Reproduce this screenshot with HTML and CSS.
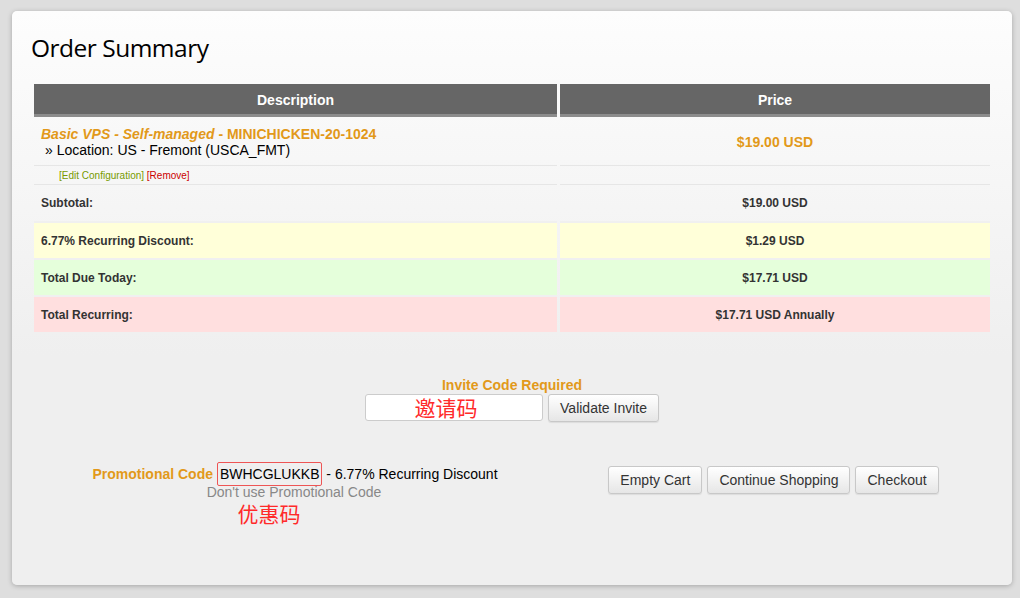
FILE: index.html
```html
<!DOCTYPE html>
<html>
    <head>
        <meta charset="UTF-8">
        <title>Order Summary</title>
        <link rel="stylesheet" href="styles.css">
    </head>
    <body>
        <div class="cart-card">
            <h1 class="cart-title">Order Summary</h1>
            <table class="cart-table">
                <thead>
                    <tr>
                        <th class="col-desc">Description</th>
                        <th class="col-price">Price</th>
                    </tr>
                </thead>
                <tbody>
                    <tr class="cart-product">
                        <td>
                            <div class="product-name"><em>Basic VPS - Self-managed</em> - MINICHICKEN-20-1024</div>
                            <div class="product-option">&raquo; Location: US - Fremont (USCA_FMT)</div>
                        </td>
                        <td class="price product-price">$19.00 USD</td>
                    </tr>
                    <tr class="cart-actions">
                        <td>
                            <a href="#" class="edit-link">[Edit Configuration]</a>
                            <a href="#" class="remove-link">[Remove]</a>
                        </td>
                        <td></td>
                    </tr>
                    <tr class="cart-sum is-subtotal">
                        <td>Subtotal:</td>
                        <td class="price">$19.00 USD</td>
                    </tr>
                    <tr class="cart-sum is-discount">
                        <td>6.77% Recurring Discount:</td>
                        <td class="price">$1.29 USD</td>
                    </tr>
                    <tr class="cart-sum is-today">
                        <td>Total Due Today:</td>
                        <td class="price">$17.71 USD</td>
                    </tr>
                    <tr class="cart-sum is-recurring">
                        <td>Total Recurring:</td>
                        <td class="price">$17.71 USD Annually</td>
                    </tr>
                </tbody>
            </table>

            <div class="invite">
                <div class="invite-label">Invite Code Required</div>
                <div class="invite-form">
                    <div class="invite-input">邀请码</div>
                    <button class="btn">Validate Invite</button>
                </div>
            </div>

            <div class="cart-bottom">
                <div class="promo">
                    <div class="promo-line">
                        <span class="promo-label">Promotional Code</span>
                        <span class="promo-code">BWHCGLUKKB</span>
                        - 6.77% Recurring Discount
                    </div>
                    <a href="#" class="promo-remove">Don't use Promotional Code</a>
                    <div class="promo-note">优惠码</div>
                </div>
                <div class="cart-buttons">
                    <button class="btn">Empty Cart</button>
                    <button class="btn">Continue Shopping</button>
                    <button class="btn">Checkout</button>
                </div>
            </div>
        </div>
    </body>
</html>
```

FILE: styles.css
```css
* {
    padding: 0;
    margin: 0;
    box-sizing: border-box;
}

html, body {
    height: 100%;
    width: 100%;
}

body {
    background-color: #dedede;
    font-family: "Liberation Sans", Arial, sans-serif;
    font-size: 14px;
    color: #000;
    padding: 11px 8px 0 12px;
}

.cart-card {
    width: 1000px;
    height: 574px;
    border-radius: 5px;
    background: linear-gradient(#fdfdfd, #efefef 60%, #efefef);
    box-shadow: 0 1px 5px rgba(0, 0, 0, 0.25);
    padding: 20px 0 0 19px;
}

.cart-title {
    font-family: "Open Sans", "Noto Sans", sans-serif;
    font-weight: 400;
    font-size: 24.5px;
    letter-spacing: -0.5px;
    color: #000;
    height: 53px;
    line-height: 34px;
}

.cart-table {
    width: 962px;
    border-collapse: separate;
    border-spacing: 3px 0;
}

.cart-table th {
    background-color: #666;
    color: #fff;
    font-size: 14px;
    font-weight: bold;
    height: 33px;
    padding-top: 1px;
    border-bottom: 3px solid #8c8c8c;
}

.cart-table .col-desc {
    width: 523px;
}

.cart-table td {
    vertical-align: middle;
}

.cart-product td {
    height: 49px;
    padding: 2px 7px 0;
    border-bottom: 1px solid #e6e6e6;
}

.product-name {
    color: #e2991a;
    font-weight: bold;
    line-height: 16px;
}

.product-option {
    padding-left: 4px;
    line-height: 17px;
}

.product-price {
    color: #e2991a;
    font-weight: bold;
    font-size: 14px;
}

.cart-actions td {
    height: 19px;
    padding-left: 25px;
    font-size: 10px;
    border-bottom: 1px solid #e6e6e6;
}

.cart-actions a {
    text-decoration: none;
}

.edit-link {
    color: #779a00;
}

.remove-link {
    color: #cc0000;
}

.cart-sum td {
    height: 37px;
    padding-left: 7px;
    font-size: 12px;
    font-weight: bold;
    color: #333;
    border-bottom: 2px solid #f0f0f0;
}

.cart-sum td.price {
    padding-left: 0;
    text-align: center;
}

.cart-sum.is-subtotal td {
    height: 38px;
}

.cart-sum.is-discount td {
    background-color: #ffffd9;
}

.cart-sum.is-today td {
    background-color: #e5ffdb;
}

.cart-sum.is-recurring td {
    background-color: #ffdfdf;
}

.price {
    text-align: center;
}

.invite {
    margin-top: 43px;
    margin-left: -19px;
    text-align: center;
}

.invite-label {
    color: #e2991a;
    font-weight: bold;
    font-size: 14px;
    line-height: 16px;
}

.invite-form {
    display: flex;
    justify-content: center;
    gap: 5px;
    margin-top: 1px;
}

.invite-input {
    width: 178px;
    height: 27px;
    background-color: #fff;
    border: 1px solid #ccc;
    border-radius: 3px;
    color: #ff2a2a;
    font-family: "Noto Sans CJK SC", sans-serif;
    font-size: 21px;
    line-height: 25px;
    text-align: center;
    padding-right: 16px;
}

.btn {
    font-family: "Liberation Sans", Arial, sans-serif;
    font-size: 14px;
    color: #333;
    height: 28px;
    padding: 0 11px;
    border: 1px solid #c8c8c8;
    border-radius: 3px;
    background: linear-gradient(#ffffff, #e6e6e6);
    box-shadow: 0 1px 1px rgba(0, 0, 0, 0.08);
}

.cart-bottom {
    display: flex;
    margin-top: 40px;
}

.promo {
    width: 526px;
    text-align: center;
}

.promo-line {
    line-height: 24px;
    padding-left: 2px;
}

.promo-label {
    color: #e2991a;
    font-weight: bold;
}

.promo-code {
    display: inline-block;
    border: 1px solid #ee5555;
    border-radius: 2px;
    padding: 0 2px;
    line-height: 22px;
}

.promo-remove {
    display: block;
    color: #888;
    text-decoration: none;
    line-height: 10px;
    padding-top: 1px;
}

.promo-note {
    color: #ff2a2a;
    font-family: "Noto Sans CJK SC", sans-serif;
    font-size: 21px;
    line-height: 28px;
    margin-top: 2px;
    margin-left: -50px;
}

.cart-buttons {
    width: 433px;
    display: flex;
    justify-content: center;
    gap: 5px;
    padding-top: 4px;
}
```
